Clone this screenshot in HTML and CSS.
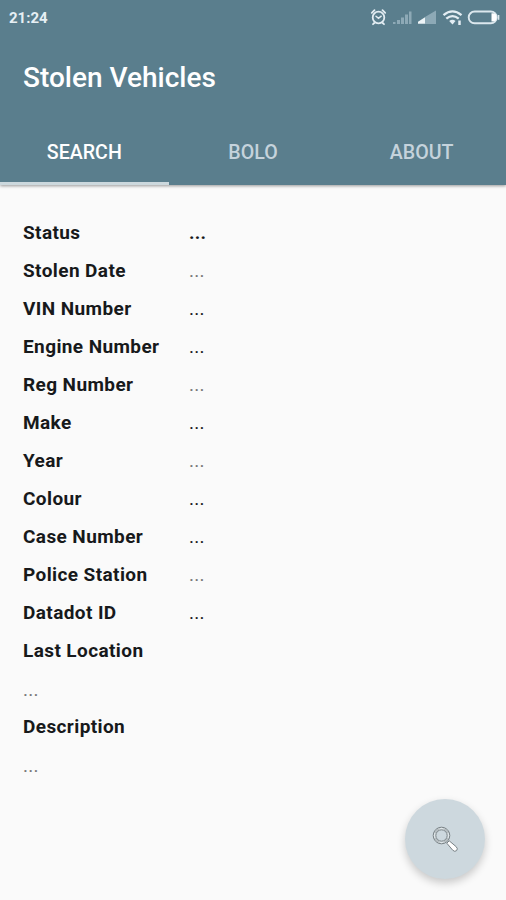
FILE: index.html
```html
<!DOCTYPE html>
<html lang="en">
<head>
<meta charset="utf-8">
<title>Stolen Vehicles</title>
<link rel="stylesheet" href="styles.css">
</head>
<body>
<header class="app-bar">
  <div class="status-bar">
    <span class="clock">21:24</span>
    <svg class="status-icons" width="136" height="24" viewBox="0 0 136 24" fill="none">
      <g stroke="#e3edf3" stroke-width="1.8" stroke-linecap="round">
        <circle cx="13.5" cy="12.5" r="5.8"/>
        <path d="M6.8 7.8 9.5 5.2M20.2 7.8 17.5 5.2M9.3 18 8 19.2M17.7 18 19 19.2"/>
        <path d="M11 11.2 13.5 13.3 16.2 11.2" stroke-width="1.5"/>
      </g>
      <g fill="#8da9b6">
        <path d="M28 17h2.500v2H28zM32 15h3v4h-3zM36 12.500h3V19h-3zM40 9.500h3V19h-3zM44 6.500h2.500V19H44z"/>
        <path d="M60 12 71 5.500V19H60z"/>
      </g>
      <path d="M53 18.800v-2l7-4.600v6.600z" fill="#edf4f7"/>
      <g stroke="#e3edf3" stroke-width="2.300">
        <path d="M78.500 10.200Q87.500 2.600 96.500 10.200M81.300 13.700Q87.500 8.500 93.700 13.700"/>
        <path d="M84.200 16Q87.500 13.300 90.500 16L87.500 19.500Z" fill="#e3edf3" stroke="none"/>
        <path d="M94.500 15.500v4.500" stroke-width="2.500"/>
      </g>
      <rect x="103.700" y="6.500" width="28" height="11.800" rx="5.900" stroke="#dce8ee" stroke-width="1.900"/>
      <path d="M126.500 8.300h1a4 4 0 0 1 0 8.200h-1z" fill="#fff"/>
      <path d="M133.600 10v4.800" stroke="#dce8ee" stroke-width="1.500"/>
    </svg>
  </div>
  <h1 class="title">Stolen Vehicles</h1>
  <nav class="tabs">
    <a class="tab active">SEARCH</a>
    <a class="tab">BOLO</a>
    <a class="tab">ABOUT</a>
  </nav>
</header>
<main class="details">
  <div class="row"><span class="label">Status</span><span class="value strong">...</span></div>
  <div class="row"><span class="label">Stolen Date</span><span class="value soft">...</span></div>
  <div class="row"><span class="label">VIN Number</span><span class="value">...</span></div>
  <div class="row"><span class="label">Engine Number</span><span class="value">...</span></div>
  <div class="row"><span class="label">Reg Number</span><span class="value soft">...</span></div>
  <div class="row"><span class="label">Make</span><span class="value">...</span></div>
  <div class="row"><span class="label">Year</span><span class="value soft">...</span></div>
  <div class="row"><span class="label">Colour</span><span class="value">...</span></div>
  <div class="row"><span class="label">Case Number</span><span class="value">...</span></div>
  <div class="row"><span class="label">Police Station</span><span class="value soft">...</span></div>
  <div class="row"><span class="label">Datadot ID</span><span class="value">...</span></div>
  <div class="row"><span class="label">Last Location</span></div>
  <div class="row"><span class="value soft block">...</span></div>
  <div class="row"><span class="label">Description</span></div>
  <div class="row"><span class="value soft block">...</span></div>
</main>
<button class="fab" aria-label="Search">
  <svg width="28" height="28" viewBox="0 0 28 28" fill="none" stroke="#788185" stroke-width="1">
    <circle cx="10.500" cy="10.500" r="8.300" fill="#dfe6e9"/>
    <circle cx="10.500" cy="10.500" r="5.700" fill="#cdd8de"/>
    <path d="M3.500 8 8 3.500M13 3.500 17.500 8M3.500 13 8 17.500M13 17.500 17.500 13" stroke-width=".8"/>
    <path d="M15.800 18.200 18.200 15.800 25.300 21.800Q27.200 23.800 25.600 25.600 23.800 27.200 21.800 25.300Z" fill="#fff"/>
  </svg>
</button>
</body>
</html>
```
FILE: styles.css
```css
* { box-sizing: border-box; }
body {
  margin: 0;
  height: 900px;
  overflow: hidden;
  background: #fafafa;
  font-family: Roboto, "Liberation Sans", sans-serif;
  color: #17191b;
}
.app-bar {
  height: 185px;
  display: flex;
  flex-direction: column;
  background: #5a7e8d;
  box-shadow: 0 1px 3px rgba(0, 0, 0, .4);
}
.status-bar {
  height: 34px;
  padding: 0 5px 0 9px;
  display: flex;
  align-items: center;
  justify-content: space-between;
}
.clock {
  padding-top: 2px;
  font-size: 15px;
  font-weight: 700;
  color: #e6eff4;
}
.title {
  margin: 0;
  height: 85px;
  padding: 2px 0 0 23px;
  font-size: 28px;
  line-height: 84px;
  font-weight: 500;
  color: #fff;
}
.tabs {
  flex: 1;
  display: grid;
  grid-template-columns: repeat(3, 1fr);
}
.tab {
  height: 66px;
  padding-top: 1px;
  text-align: center;
  font-size: 19.6px;
  font-weight: 500;
  line-height: 65px;
  color: #c5d3dc;
  border-bottom: 3px solid transparent;
}
.tab.active {
  color: #fff;
  border-color: #ccd8dd;
}
.details {
  padding: 29px 23px 0;
}
.row {
  height: 38px;
  display: flex;
  line-height: 38px;
}
.label {
  width: 166px;
  font-size: 19px;
  font-weight: 700;
  letter-spacing: .4px;
}
.value {
  font-size: 19px;
  line-height: 38px;
  letter-spacing: .2px;
}
.strong { font-weight: 700; }
.soft { color: #777; }
.block { padding-top: 1px; }
.fab {
  position: absolute;
  left: 405px;
  top: 799px;
  width: 80px;
  height: 80px;
  padding: 0;
  border: 0;
  border-radius: 50%;
  display: flex;
  align-items: center;
  justify-content: center;
  background: #cdd8de;
  box-shadow: 0 4px 8px rgba(0, 0, 0, .2);
}
```
